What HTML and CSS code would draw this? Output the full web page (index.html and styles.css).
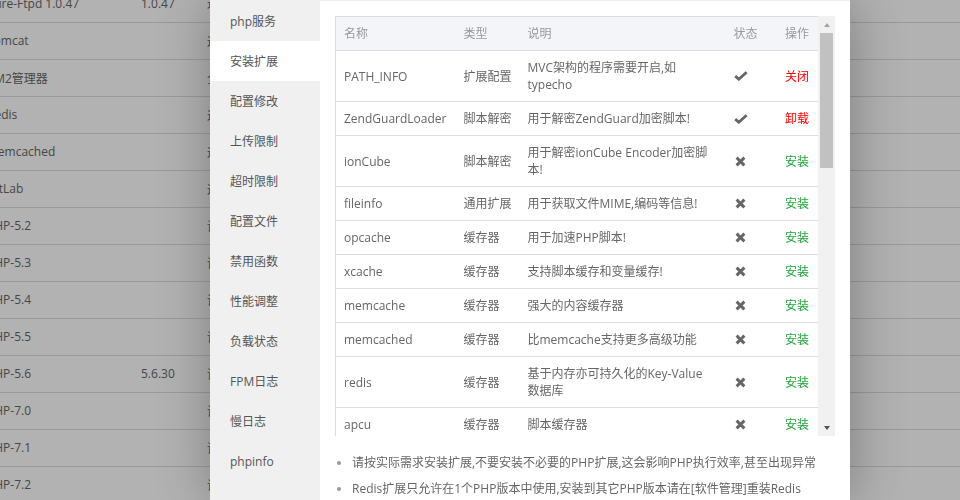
FILE: index.html
```html
<!DOCTYPE html>
<html lang="zh-CN">
<head>
  <meta charset="UTF-8" />
  <meta name="viewport" content="width=device-width, initial-scale=1.0"/>
  <title>PHP管理 - 安装扩展</title>
  <link rel="stylesheet" href="styles.css">
</head>
<body>

  <table class="soft-list">
    <tr><td class="c-name">Pure-Ftpd 1.0.47</td><td class="c-ver">1.0.47</td><td>运行环境</td></tr>
    <tr><td class="c-name">Tomcat</td><td class="c-ver"></td><td>运行环境</td></tr>
    <tr><td class="c-name">PM2管理器</td><td class="c-ver"></td><td>全部软件</td></tr>
    <tr><td class="c-name">Redis</td><td class="c-ver"></td><td>运行环境</td></tr>
    <tr><td class="c-name">Memcached</td><td class="c-ver"></td><td>运行环境</td></tr>
    <tr><td class="c-name">GitLab</td><td class="c-ver"></td><td>运行环境</td></tr>
    <tr><td class="c-name">PHP-5.2</td><td class="c-ver"></td><td>语言解释器</td></tr>
    <tr><td class="c-name">PHP-5.3</td><td class="c-ver"></td><td>语言解释器</td></tr>
    <tr><td class="c-name">PHP-5.4</td><td class="c-ver"></td><td>语言解释器</td></tr>
    <tr><td class="c-name">PHP-5.5</td><td class="c-ver"></td><td>语言解释器</td></tr>
    <tr><td class="c-name">PHP-5.6</td><td class="c-ver">5.6.30</td><td>语言解释器</td></tr>
    <tr><td class="c-name">PHP-7.0</td><td class="c-ver"></td><td>语言解释器</td></tr>
    <tr><td class="c-name">PHP-7.1</td><td class="c-ver"></td><td>语言解释器</td></tr>
    <tr><td class="c-name">PHP-7.2</td><td class="c-ver"></td><td>语言解释器</td></tr>
  </table>

  <div class="shade"></div>

  <div class="layer">
    <ul class="side-menu">
      <li>php服务</li>
      <li class="active">安装扩展</li>
      <li>配置修改</li>
      <li>上传限制</li>
      <li>超时限制</li>
      <li>配置文件</li>
      <li>禁用函数</li>
      <li>性能调整</li>
      <li>负载状态</li>
      <li>FPM日志</li>
      <li>慢日志</li>
      <li>phpinfo</li>
    </ul>

    <div class="layer-main">
      <div class="ext-box">
        <div class="ext-scroll">
          <table class="ext-table">
            <colgroup>
              <col class="w-name"><col class="w-type"><col class="w-desc"><col class="w-status"><col class="w-op">
            </colgroup>
            <thead>
              <tr><th>名称</th><th>类型</th><th>说明</th><th>状态</th><th class="op">操作</th></tr>
            </thead>
            <tbody>
              <tr>
                <td>PATH_INFO</td><td>扩展配置</td><td class="desc">MVC架构的程序需要开启,如typecho</td>
                <td><svg class="ico-ok" viewBox="0 0 14 10"><polyline points="1.2,5.2 4.8,8.2 12.6,1.2"/></svg></td>
                <td class="op"><a class="btn-red">关闭</a></td>
              </tr>
              <tr>
                <td>ZendGuardLoader</td><td>脚本解密</td><td class="desc">用于解密ZendGuard加密脚本!</td>
                <td><svg class="ico-ok" viewBox="0 0 14 10"><polyline points="1.2,5.2 4.8,8.2 12.6,1.2"/></svg></td>
                <td class="op"><a class="btn-red">卸载</a></td>
              </tr>
              <tr>
                <td>ionCube</td><td>脚本解密</td><td class="desc">用于解密ionCube Encoder加密脚本!</td>
                <td><svg class="ico-no" viewBox="0 0 11 11"><path d="M1.6 1.6 L9.4 9.4 M9.4 1.6 L1.6 9.4"/></svg></td>
                <td class="op"><a class="btn-green">安装</a></td>
              </tr>
              <tr>
                <td>fileinfo</td><td>通用扩展</td><td class="desc">用于获取文件MIME,编码等信息!</td>
                <td><svg class="ico-no" viewBox="0 0 11 11"><path d="M1.6 1.6 L9.4 9.4 M9.4 1.6 L1.6 9.4"/></svg></td>
                <td class="op"><a class="btn-green">安装</a></td>
              </tr>
              <tr>
                <td>opcache</td><td>缓存器</td><td class="desc">用于加速PHP脚本!</td>
                <td><svg class="ico-no" viewBox="0 0 11 11"><path d="M1.6 1.6 L9.4 9.4 M9.4 1.6 L1.6 9.4"/></svg></td>
                <td class="op"><a class="btn-green">安装</a></td>
              </tr>
              <tr>
                <td>xcache</td><td>缓存器</td><td class="desc">支持脚本缓存和变量缓存!</td>
                <td><svg class="ico-no" viewBox="0 0 11 11"><path d="M1.6 1.6 L9.4 9.4 M9.4 1.6 L1.6 9.4"/></svg></td>
                <td class="op"><a class="btn-green">安装</a></td>
              </tr>
              <tr>
                <td>memcache</td><td>缓存器</td><td class="desc">强大的内容缓存器</td>
                <td><svg class="ico-no" viewBox="0 0 11 11"><path d="M1.6 1.6 L9.4 9.4 M9.4 1.6 L1.6 9.4"/></svg></td>
                <td class="op"><a class="btn-green">安装</a></td>
              </tr>
              <tr>
                <td>memcached</td><td>缓存器</td><td class="desc">比memcache支持更多高级功能</td>
                <td><svg class="ico-no" viewBox="0 0 11 11"><path d="M1.6 1.6 L9.4 9.4 M9.4 1.6 L1.6 9.4"/></svg></td>
                <td class="op"><a class="btn-green">安装</a></td>
              </tr>
              <tr>
                <td>redis</td><td>缓存器</td><td class="desc">基于内存亦可持久化的Key-Value数据库</td>
                <td><svg class="ico-no" viewBox="0 0 11 11"><path d="M1.6 1.6 L9.4 9.4 M9.4 1.6 L1.6 9.4"/></svg></td>
                <td class="op"><a class="btn-green">安装</a></td>
              </tr>
              <tr>
                <td>apcu</td><td>缓存器</td><td class="desc">脚本缓存器</td>
                <td><svg class="ico-no" viewBox="0 0 11 11"><path d="M1.6 1.6 L9.4 9.4 M9.4 1.6 L1.6 9.4"/></svg></td>
                <td class="op"><a class="btn-green">安装</a></td>
              </tr>
              <tr>
                <td>imagemagick</td><td>通用扩展</td><td class="desc">Imagick高性能图形库</td>
                <td><svg class="ico-no" viewBox="0 0 11 11"><path d="M1.6 1.6 L9.4 9.4 M9.4 1.6 L1.6 9.4"/></svg></td>
                <td class="op"><a class="btn-green">安装</a></td>
              </tr>
            </tbody>
          </table>
        </div>
        <div class="scrollbar">
          <div class="sb-btn"><span class="arrow-up"></span></div>
          <div class="sb-thumb"></div>
          <div class="sb-track"></div>
          <div class="sb-btn"><span class="arrow-down"></span></div>
        </div>
      </div>

      <ul class="tips">
        <li>请按实际需求安装扩展,不要安装不必要的PHP扩展,这会影响PHP执行效率,甚至出现异常</li>
        <li>Redis扩展只允许在1个PHP版本中使用,安装到其它PHP版本请在[软件管理]重装Redis</li>
      </ul>
    </div>
  </div>

</body>
</html>
```

FILE: styles.css
```css
* {
  box-sizing: border-box;
}

html, body {
  margin: 0;
  padding: 0;
  height: 100%;
  overflow: hidden;
}

body {
  font-family: 'Open Sans', 'Noto Sans CJK SC', sans-serif;
  font-size: 12px;
  color: #666;
  background: #fff;
}

/* page behind the dialog */
.soft-list {
  width: 100%;
  margin-top: -15px;
  border-collapse: collapse;
  color: #666;
}

.soft-list td {
  height: 37px;
  padding: 0;
  border-bottom: 1px solid #ddd;
  vertical-align: middle;
  white-space: nowrap;
}

.soft-list .c-name {
  width: 141px;
  text-indent: -13px;
}

.soft-list .c-ver {
  width: 66px;
}

.shade {
  position: fixed;
  top: 0;
  left: 0;
  right: 0;
  bottom: 0;
  background: rgba(0, 0, 0, 0.3);
}

/* dialog */
.layer {
  position: absolute;
  top: 0;
  left: 210px;
  width: 640px;
  height: 500px;
  display: flex;
  background: #fff;
  border-top: 1px solid #eee;
  box-shadow: 1px 1px 50px rgba(0, 0, 0, 0.3);
}

.side-menu {
  width: 110px;
  margin: 0;
  padding: 0;
  list-style: none;
  background: #f0f0f0;
}

.side-menu li {
  height: 40px;
  line-height: 42px;
  padding-left: 20px;
  color: #555;
  font-size: 12px;
}

.side-menu li.active {
  background: #fff;
}

.layer-main {
  flex: 1;
  padding: 15px;
}

.ext-box {
  display: flex;
  height: 420px;
}

.ext-scroll {
  width: 483px;
  overflow: hidden;
}

.ext-table {
  width: 483px;
  border-collapse: collapse;
  table-layout: fixed;
  border: 1px solid #ddd;
  font-size: 12px;
  color: #666;
}

.w-name { width: 120px; }
.w-type { width: 64px; }
.w-desc { width: 206px; }
.w-status { width: 51px; }
.w-op { width: 42px; }

.ext-table th,
.ext-table td {
  padding: 8px;
  line-height: 17px;
  text-align: left;
  vertical-align: middle;
  border-bottom: 1px solid #ddd;
  font-weight: normal;
}

.ext-table th {
  background: #f4f5f8;
  color: #999;
}

.ext-table td.desc {
  padding-right: 14px;
}

.ext-table .op {
  text-align: right;
  padding-right: 9px;
  white-space: nowrap;
}

.ico-ok,
.ico-no {
  display: block;
  fill: none;
  stroke: #666;
}

.ico-ok {
  width: 14px;
  height: 10px;
  stroke-width: 2.8;
}

.ico-no {
  width: 11px;
  height: 11px;
  margin-left: 1px;
  stroke-width: 2.9;
}

.btn-red {
  color: #f00;
}

.btn-green {
  color: #20a53a;
}

/* fake scrollbar */
.scrollbar {
  width: 17px;
  display: flex;
  flex-direction: column;
  align-items: center;
  background: #f1f1f1;
}

.sb-btn {
  height: 17px;
  width: 17px;
  display: flex;
  align-items: center;
  justify-content: center;
}

.arrow-up,
.arrow-down {
  width: 0;
  height: 0;
  border-left: 3.5px solid transparent;
  border-right: 3.5px solid transparent;
}

.arrow-up {
  border-bottom: 4px solid #a3a3a3;
}

.arrow-down {
  border-top: 4px solid #505050;
}

.sb-thumb {
  width: 13px;
  height: 135px;
  background: #c1c1c1;
}

.sb-track {
  flex: 1;
}

/* notes */
.tips {
  margin: 14px 0 0;
  padding: 0;
  list-style: none;
}

.tips li {
  position: relative;
  line-height: 26px;
  padding-left: 17px;
  color: #666;
  white-space: nowrap;
}

.tips li::before {
  content: '';
  position: absolute;
  left: 2px;
  top: 11px;
  width: 4px;
  height: 4px;
  border-radius: 50%;
  background: #999;
}
```
